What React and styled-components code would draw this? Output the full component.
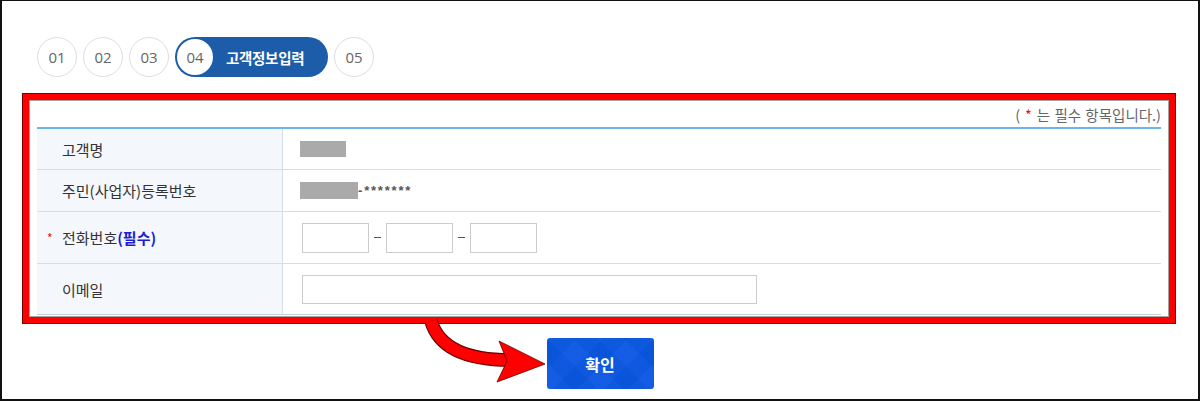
import React from "react";
import styled, { createGlobalStyle } from "styled-components";

const GlobalStyle = createGlobalStyle`
  html, body {
    margin: 0;
    padding: 0;
    background: #ffffff;
  }
  body {
    font-family: "Noto Sans CJK KR", "Noto Sans", sans-serif;
  }
`;

const Frame = styled.div`
  position: relative;
  box-sizing: border-box;
  width: 1200px;
  height: 401px;
  border: 2px solid #111;
  border-top-width: 1px;
  background: #fff;
  padding-top: 36px;
  overflow: hidden;
`;

// STEPPER
const Stepper = styled.ol`
  display: flex;
  gap: 6px;
  list-style: none;
  margin: 0;
  padding: 0 0 0 35px;
  height: 40px;
`;

const Step = styled.li`
  box-sizing: border-box;
  width: 40px;
  height: 40px;
  border: 1px solid #dedede;
  border-radius: 50%;
  display: flex;
  align-items: center;
  justify-content: center;
  font-family: "Open Sans", "Noto Sans", sans-serif;
  font-size: 15px;
  color: #666;
`;

const ActiveStep = styled.li`
  box-sizing: border-box;
  width: 153px;
  height: 40px;
  padding: 2px;
  border-radius: 20px;
  background: #1c5ca8;
  display: flex;
  align-items: center;
  gap: 13px;
`;

const ActiveNumber = styled.span`
  width: 36px;
  height: 36px;
  border-radius: 50%;
  background: #fff;
  display: flex;
  align-items: center;
  justify-content: center;
  font-family: "Open Sans", "Noto Sans", sans-serif;
  font-size: 15px;
  color: #666;
`;

const ActiveLabel = styled.span`
  color: #fff;
  font-size: 14.5px;
  font-weight: 700;
  letter-spacing: -0.3px;
`;

// FORM
const Highlight = styled.div`
  box-sizing: border-box;
  width: 1154px;
  margin: 16px 0 0 20px;
  border: 7px solid #ff0000;
  outline: 1px solid #7a0000;
  outline-offset: -1px;
`;

const Panel = styled.div`
  border: 1px solid #a3a3a3;
  padding: 0 7px 1px;
  background: #fff;
`;

const Note = styled.p`
  margin: 0;
  height: 26px;
  display: flex;
  align-items: center;
  justify-content: flex-end;
  font-size: 14.5px;
  color: #666;
  word-spacing: 1px;
`;

const Star = styled.span`
  color: #ee1111;
  margin: 0 5px;
`;

const Table = styled.div`
  border-top: 2px solid #6db5e8;
`;

const Row = styled.div`
  display: grid;
  grid-template-columns: 246px 1fr;
  height: ${(p) => p.$h}px;
  border-bottom: 1px solid ${(p) => (p.$last ? "#c6d0da" : "#d3dee8")};
`;

const Label = styled.div`
  display: flex;
  align-items: center;
  padding-left: 10px;
  background: #f4f7fb;
  border-right: 1px solid #d3dee8;
  font-size: 15px;
  color: #333;
`;

const ReqMark = styled.span`
  display: inline-block;
  width: 15px;
  color: #ee1111;
  font-size: 12px;
`;

const Required = styled.span`
  color: #1c1cd6;
  font-weight: 700;
`;

const Value = styled.div`
  display: flex;
  align-items: center;
  padding-left: 17px;
`;

const Masked = styled.span`
  display: inline-block;
  width: ${(p) => p.$w}px;
  height: ${(p) => p.$hgt}px;
  background: #aaaaaa;
`;

const Hidden = styled.span`
  font-family: "Liberation Sans", sans-serif;
  font-size: 13px;
  font-weight: 700;
  color: #555;
  letter-spacing: 1.8px;
`;

const InputGroup = styled.div`
  display: flex;
  align-items: center;
  padding-left: 2px;
`;

const TextInput = styled.input`
  box-sizing: border-box;
  width: ${(p) => p.$w}px;
  height: ${(p) => p.$hgt}px;
  border: 1px solid #cccccc;
  margin: 0;
  padding: 0 6px;
  background: #fff;
  outline: none;
`;

const Dash = styled.span`
  width: 7px;
  height: 1px;
  margin: 0 5px;
  background: #555;
`;

// BUTTON
const Actions = styled.div`
  display: flex;
  justify-content: center;
  margin-top: 14px;
`;

const ConfirmButton = styled.button`
  width: 107px;
  height: 51px;
  border: none;
  border-radius: 3px;
  color: #fff;
  font-family: "Noto Sans CJK KR", sans-serif;
  font-size: 16px;
  font-weight: 700;
  background-color: #0a57e2;
  background-image: repeating-linear-gradient(
      45deg,
      rgba(255, 255, 255, 0.018) 0 18px,
      rgba(0, 0, 0, 0.018) 18px 36px
    ),
    repeating-linear-gradient(
      -45deg,
      rgba(255, 255, 255, 0.018) 0 18px,
      rgba(0, 0, 0, 0.018) 18px 36px
    );
  cursor: pointer;
`;

const ArrowLayer = styled.svg`
  position: absolute;
  left: -2px;
  top: -1px;
  width: 1200px;
  height: 401px;
  pointer-events: none;
`;

function Arrow() {
  return (
    <ArrowLayer viewBox="0 0 1200 401">
      <path
        d="M431 321 C438 345 462 360 510 360"
        fill="none"
        stroke="#6a0000"
        strokeWidth="13.5"
      />
      <path
        d="M431 321 C438 345 462 360 510 360"
        fill="none"
        stroke="#ff0000"
        strokeWidth="11.5"
      />
      <polygon
        points="499,341 545,364 497,382 507,361"
        fill="#ff0000"
        stroke="#6a0000"
        strokeWidth="0.8"
        strokeLinejoin="miter"
      />
    </ArrowLayer>
  );
}

export default function App() {
  return (
    <>
      <GlobalStyle />
      <Frame>
        <Stepper>
          <Step>01</Step>
          <Step>02</Step>
          <Step>03</Step>
          <ActiveStep>
            <ActiveNumber>04</ActiveNumber>
            <ActiveLabel>고객정보입력</ActiveLabel>
          </ActiveStep>
          <Step>05</Step>
        </Stepper>

        <Highlight>
          <Panel>
            <Note>
              (<Star>*</Star>는 필수 항목입니다.)
            </Note>
            <Table>
              <Row $h={40}>
                <Label>
                  <ReqMark />
                  고객명
                </Label>
                <Value>
                  <Masked $w={46} $hgt={16} />
                </Value>
              </Row>
              <Row $h={41}>
                <Label>
                  <ReqMark />
                  주민(사업자)등록번호
                </Label>
                <Value>
                  <Masked $w={58} $hgt={17} />
                  <Hidden>-*******</Hidden>
                </Value>
              </Row>
              <Row $h={51}>
                <Label>
                  <ReqMark>*</ReqMark>
                  전화번호<Required>(필수)</Required>
                </Label>
                <Value>
                  <InputGroup>
                    <TextInput $w={67} $hgt={30} />
                    <Dash />
                    <TextInput $w={67} $hgt={30} />
                    <Dash />
                    <TextInput $w={67} $hgt={30} />
                  </InputGroup>
                </Value>
              </Row>
              <Row $h={50} $last>
                <Label>
                  <ReqMark />
                  이메일
                </Label>
                <Value>
                  <InputGroup>
                    <TextInput $w={455} $hgt={29} />
                  </InputGroup>
                </Value>
              </Row>
            </Table>
          </Panel>
        </Highlight>

        <Actions>
          <ConfirmButton>확인</ConfirmButton>
        </Actions>

        <Arrow />
      </Frame>
    </>
  );
}
